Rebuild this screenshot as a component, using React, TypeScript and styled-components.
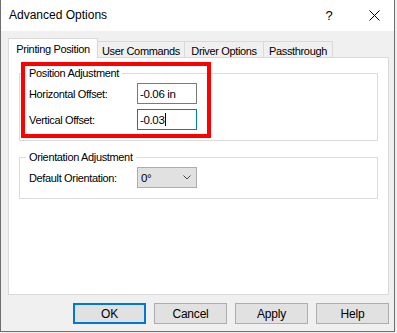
import React from "react";
import styled, { createGlobalStyle } from "styled-components";

const Global = createGlobalStyle`
  html, body { margin: 0; padding: 0; background: #f0f0f0; }
  body { font-family: "Liberation Sans", Arial, sans-serif; }
`;

const Window = styled.div`
  box-sizing: border-box;
  width: 395px;
  height: 332px;
  border: 1px solid #6e6e6e;
  border-top: none;
  background: #f0f0f0;
  display: flex;
  flex-direction: column;
  font-family: "Liberation Sans", Arial, sans-serif;
  font-size: 11px;
  letter-spacing: -0.35px;
  color: #000;
`;

const TitleBar = styled.div`
  flex: none;
  height: 31px;
  background: #fff;
  display: flex;
  align-items: center;
  padding-left: 8px;
  font-size: 12px;
  letter-spacing: 0;
`;

const Title = styled.span`
  flex: 1;
  padding-bottom: 1px;
`;

const CaptionButton = styled.div<{ $w: number }>`
  width: ${(p) => p.$w}px;
  height: 31px;
  display: flex;
  align-items: center;
  justify-content: center;
  font-size: 13px;
`;

const Body = styled.div`
  flex: 1;
  display: flex;
  flex-direction: column;
  padding: 7px 5px 7px 7px;
  min-height: 0;
`;

const TabStrip = styled.div`
  display: flex;
  align-items: flex-end;
  height: 20px;
  margin-bottom: -1px;
  position: relative;
  z-index: 1;
`;

const Tab = styled.div<{ $active?: boolean; $w: number }>`
  box-sizing: border-box;
  width: ${(p) => p.$w}px;
  height: ${(p) => (p.$active ? 20 : 16)}px;
  margin-bottom: ${(p) => (p.$active ? 0 : 1)}px;
  margin-left: -1px;
  border: 1px solid #d9d9d9;
  border-bottom: none;
  background: ${(p) => (p.$active ? "#fff" : "#f0f0f0")};
  display: flex;
  align-items: center;
  justify-content: center;
  padding-top: ${(p) => (p.$active ? 0 : 2)}px;
  position: relative;
  z-index: ${(p) => (p.$active ? 2 : 1)};
  white-space: nowrap;
  &:first-child {
    margin-left: 0;
  }
`;

const Panel = styled.div`
  flex: 1;
  background: #fff;
  border: 1px solid #d9d9d9;
  position: relative;
  padding: 8px 10px 0 10px;
  display: flex;
  flex-direction: column;
  gap: 9px;
`;

const Group = styled.fieldset`
  margin: 0;
  padding: 3px 9px 10px 9px;
  border: 1px solid #dcdcdc;
  min-width: 0;
  display: flex;
  flex-direction: column;
  gap: 5px;
`;

const Legend = styled.legend`
  padding: 0 3px;
  margin-left: -3px;
  line-height: 14px;
`;

const Row = styled.div`
  display: grid;
  grid-template-columns: 108px auto;
  align-items: center;
`;

const Label = styled.span`
  white-space: nowrap;
`;

const TextBox = styled.div<{ $focused?: boolean }>`
  box-sizing: border-box;
  width: 60px;
  height: 21px;
  border: 1px solid ${(p) => (p.$focused ? "#0078d7" : "#7a7a7a")};
  background: #fff;
  padding-left: 2px;
  display: flex;
  align-items: center;
  font-size: 11.5px;
`;

const Caret = styled.span`
  width: 1px;
  height: 13px;
  background: #000;
  margin-left: 1px;
`;

const Select = styled.div`
  box-sizing: border-box;
  width: 60px;
  height: 21px;
  border: 1px solid #adadad;
  background: #e1e1e1;
  display: flex;
  align-items: center;
  justify-content: space-between;
  padding: 0 5px 0 3px;
  font-size: 11.5px;
`;

const Highlight = styled.div`
  position: absolute;
  left: 12px;
  top: 4px;
  width: 190px;
  height: 76px;
  box-sizing: border-box;
  border: 4px solid #ff0000;
  pointer-events: none;
`;

const ButtonRow = styled.div`
  display: flex;
  justify-content: flex-end;
  gap: 8px;
  margin-top: 8px;
`;

const Button = styled.button<{ $default?: boolean }>`
  box-sizing: border-box;
  width: 73px;
  height: 21px;
  margin: 0;
  padding: 0;
  border: ${(p) => (p.$default ? "2px solid #0078d7" : "1px solid #adadad")};
  background: #e1e1e1;
  font-family: inherit;
  font-size: 12px;
  letter-spacing: -0.2px;
  color: #000;
`;

const tabs = [
  { label: "Printing Position", w: 90, active: true },
  { label: "User Commands", w: 88 },
  { label: "Driver Options", w: 80 },
  { label: "Passthrough", w: 70 },
];

export default function App() {
  return (
    <>
      <Global />
      <Window>
        <TitleBar>
          <Title>Advanced Options</Title>
          <CaptionButton $w={50}>?</CaptionButton>
          <CaptionButton $w={40}>
            <svg width="11" height="11" viewBox="0 0 11 11">
              <path d="M0.5 0.5 L10.5 10.5 M10.5 0.5 L0.5 10.5" stroke="#000" strokeWidth="1" fill="none" />
            </svg>
          </CaptionButton>
        </TitleBar>
        <Body>
          <TabStrip>
            {tabs.map((t) => (
              <Tab key={t.label} $w={t.w} $active={t.active}>
                {t.label}
              </Tab>
            ))}
          </TabStrip>
          <Panel>
            <Group>
              <Legend>Position Adjustment</Legend>
              <Row>
                <Label>Horizontal Offset:</Label>
                <TextBox>-0.06 in</TextBox>
              </Row>
              <Row>
                <Label>Vertical Offset:</Label>
                <TextBox $focused>
                  -0.03
                  <Caret />
                </TextBox>
              </Row>
            </Group>
            <Group>
              <Legend>Orientation Adjustment</Legend>
              <Row>
                <Label>Default Orientation:</Label>
                <Select>
                  <span>0°</span>
                  <svg width="8" height="5" viewBox="0 0 8 5">
                    <path d="M0.5 0.5 L4 4 L7.5 0.5" stroke="#444" strokeWidth="1" fill="none" />
                  </svg>
                </Select>
              </Row>
            </Group>
            <Highlight />
          </Panel>
          <ButtonRow>
            <Button $default>OK</Button>
            <Button>Cancel</Button>
            <Button>Apply</Button>
            <Button>Help</Button>
          </ButtonRow>
        </Body>
      </Window>
    </>
  );
}
